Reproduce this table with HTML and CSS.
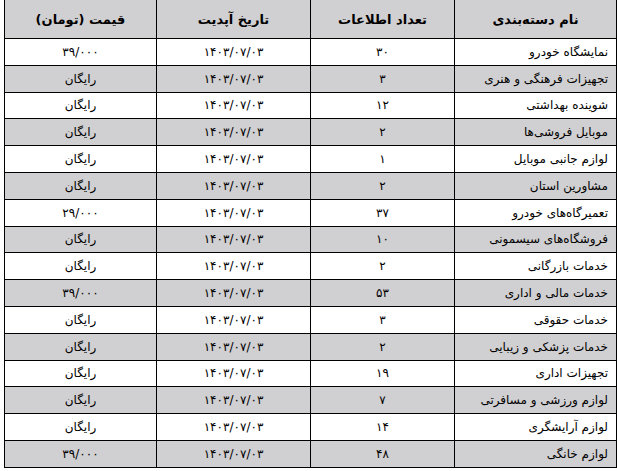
FILE: index.html
```html
<!DOCTYPE html>
<html lang="fa" dir="rtl">
<head>
<meta charset="utf-8">
<title>دسته‌بندی‌ها</title>
<link rel="stylesheet" href="styles.css">
</head>
<body>
<table class="tbl">
  <colgroup>
    <col class="c-name">
    <col class="c-count">
    <col class="c-date">
    <col class="c-price">
  </colgroup>
  <thead>
    <tr class="head">
      <th>نام دسته‌بندی</th>
      <th>تعداد اطلاعات</th>
      <th>تاریخ آپدیت</th>
      <th>قیمت (تومان)</th>
    </tr>
  </thead>
  <tbody>
    <tr><td class="name">نمایشگاه خودرو</td><td class="num">۳۰</td><td class="num">۱۴۰۳/۰۷/۰۳</td><td class="num">۳۹/۰۰۰</td></tr>
    <tr><td class="name">تجهیزات فرهنگی و هنری</td><td class="num">۳</td><td class="num">۱۴۰۳/۰۷/۰۳</td><td>رایگان</td></tr>
    <tr><td class="name">شوینده بهداشتی</td><td class="num">۱۲</td><td class="num">۱۴۰۳/۰۷/۰۳</td><td>رایگان</td></tr>
    <tr><td class="name">موبایل فروشی‌ها</td><td class="num">۲</td><td class="num">۱۴۰۳/۰۷/۰۳</td><td>رایگان</td></tr>
    <tr><td class="name">لوازم جانبی موبایل</td><td class="num">۱</td><td class="num">۱۴۰۳/۰۷/۰۳</td><td>رایگان</td></tr>
    <tr><td class="name">مشاورین استان</td><td class="num">۲</td><td class="num">۱۴۰۳/۰۷/۰۳</td><td>رایگان</td></tr>
    <tr><td class="name">تعمیرگاه‌های خودرو</td><td class="num">۳۷</td><td class="num">۱۴۰۳/۰۷/۰۳</td><td class="num">۲۹/۰۰۰</td></tr>
    <tr><td class="name">فروشگاه‌های سیسمونی</td><td class="num">۱۰</td><td class="num">۱۴۰۳/۰۷/۰۳</td><td>رایگان</td></tr>
    <tr><td class="name">خدمات بازرگانی</td><td class="num">۲</td><td class="num">۱۴۰۳/۰۷/۰۳</td><td>رایگان</td></tr>
    <tr><td class="name">خدمات مالی و اداری</td><td class="num">۵۳</td><td class="num">۱۴۰۳/۰۷/۰۳</td><td class="num">۳۹/۰۰۰</td></tr>
    <tr><td class="name">خدمات حقوقی</td><td class="num">۳</td><td class="num">۱۴۰۳/۰۷/۰۳</td><td>رایگان</td></tr>
    <tr><td class="name">خدمات پزشکی و زیبایی</td><td class="num">۲</td><td class="num">۱۴۰۳/۰۷/۰۳</td><td>رایگان</td></tr>
    <tr><td class="name">تجهیزات اداری</td><td class="num">۱۹</td><td class="num">۱۴۰۳/۰۷/۰۳</td><td>رایگان</td></tr>
    <tr><td class="name">لوازم ورزشی و مسافرتی</td><td class="num">۷</td><td class="num">۱۴۰۳/۰۷/۰۳</td><td>رایگان</td></tr>
    <tr><td class="name">لوازم آرایشگری</td><td class="num">۱۴</td><td class="num">۱۴۰۳/۰۷/۰۳</td><td>رایگان</td></tr>
    <tr><td class="name">لوازم خانگی</td><td class="num">۴۸</td><td class="num">۱۴۰۳/۰۷/۰۳</td><td class="num">۳۹/۰۰۰</td></tr>
  </tbody>
</table>
</body>
</html>
```
FILE: styles.css
```css
html, body {
  margin: 0;
  padding: 0;
  background: #ffffff;
}
body {
  font-family: "DejaVu Sans", "Noto Sans", sans-serif;
  color: #000;
}
.tbl {
  border-collapse: collapse;
  table-layout: fixed;
  width: 612px;
  margin: -1px 0 0 2px;
  font-size: 12px;
}
.c-name { width: 162px; }
.c-count { width: 144px; }
.c-date { width: 154px; }
.c-price { width: 152px; }
.tbl th, .tbl td {
  border: 1px solid #000;
  padding: 0 8px;
  text-align: center;
  white-space: nowrap;
  overflow: hidden;
}
.tbl th {
  font-weight: bold;
  font-size: 13px;
}
.head {
  height: 39px;
  background: #d0cfd1;
}
.tbl tbody tr {
  height: 26.8px;
}
.tbl tbody tr:nth-child(even) {
  background: #d0cfd1;
}
.tbl td.name {
  text-align: right;
}
.tbl td.num {
  letter-spacing: 1px;
}
```
